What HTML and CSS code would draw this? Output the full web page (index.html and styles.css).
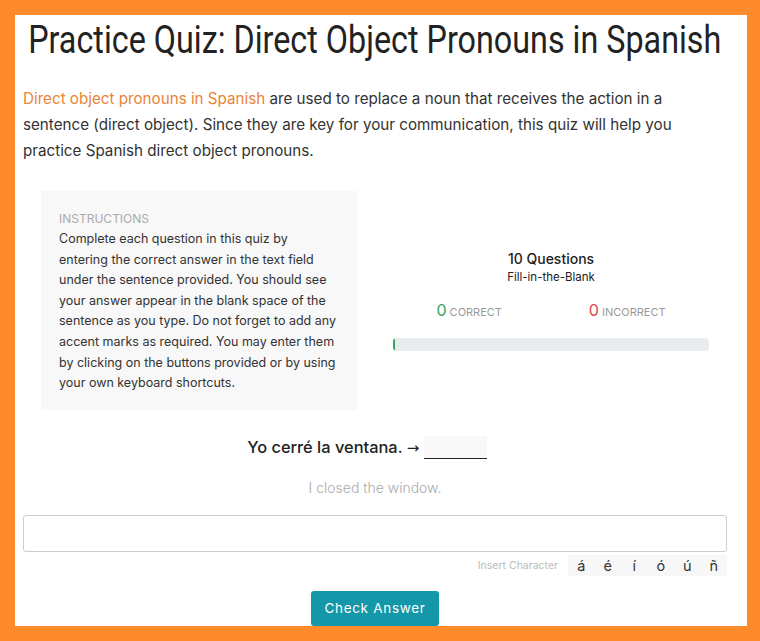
FILE: index.html
```html
<!DOCTYPE html>
<html lang="en">
<head>
    <meta charset="UTF-8">
    <meta name="viewport" content="width=device-width, initial-scale=1.0">
    <title>Practice Quiz: Direct Object Pronouns in Spanish</title>
    <link rel="stylesheet" href="styles.css">
</head>
<body>
    <div class="frame">
        <div class="page">
            <div class="title-wrap">
                <h1>Practice Quiz: Direct Object Pronouns in Spanish</h1>
            </div>
            <p class="intro">
                <a href="#">Direct object pronouns in Spanish</a> are used to replace a noun that receives the action in a
                sentence (direct object). Since they are key for your communication, this quiz will help you
                practice Spanish direct object pronouns.
            </p>

            <div class="quiz-top">
                <div class="col">
                    <div class="instructions">
                        <div class="label">INSTRUCTIONS</div>
                        <p>Complete each question in this quiz by entering the correct answer in the text field under the sentence provided. You should see your answer appear in the blank space of the sentence as you type. Do not forget to add any accent marks as required. You may enter them by clicking on the buttons provided or by using your own keyboard shortcuts.</p>
                    </div>
                </div>
                <div class="col stats">
                    <div class="count">10 Questions</div>
                    <div class="type">Fill-in-the-Blank</div>
                    <div class="score">
                        <span><b class="good">0</b> CORRECT</span>
                        <span><b class="bad">0</b> INCORRECT</span>
                    </div>
                    <div class="progress"><div class="bar" style="width: 0.5%"></div></div>
                </div>
            </div>

            <div class="question">
                Yo cerré la ventana. <span class="arrow">&rarr;</span> <span class="blank"></span>
            </div>
            <div class="translation">I closed the window.</div>

            <input type="text" class="answer">
            <div class="chars">
                <span class="chars-label">Insert Character</span>
                <div class="char-buttons">
                    <button>á</button>
                    <button>é</button>
                    <button>í</button>
                    <button>ó</button>
                    <button>ú</button>
                    <button>ñ</button>
                </div>
            </div>

            <div class="actions">
                <button class="check">Check Answer</button>
            </div>
        </div>
    </div>
</body>
</html>
```

FILE: styles.css
```css
/* Reset */
body, h1, p {
    margin: 0;
    padding: 0;
    box-sizing: border-box;
}

body {
    font-family: Inter, "Noto Sans", sans-serif;
    background-color: #fd8b2b;
    color: #333;
}

/* White frame inside the orange border */
.frame {
    margin: 15px 13px 0 15px;
    height: 611px;
    overflow: hidden;
    background: #fff;
}

.page {
    padding: 0 20px 0 8px;
}

/* Title - condensed look */
.title-wrap {
    display: flex;
    justify-content: center;
    padding-top: 2px;
    height: 48px;
}

h1 {
    flex: none;
    white-space: nowrap;
    font-family: Roboto, sans-serif;
    font-weight: 400;
    font-size: 38px;
    line-height: 46px;
    color: #222;
    transform: scaleX(0.85);
    transform-origin: center;
}

.intro {
    margin-top: 21px;
    font-size: 15.2px;
    line-height: 26px;
    color: #333;
}

.intro a {
    color: #e8843a;
    text-decoration: none;
}

/* Instructions and stats */
.quiz-top {
    display: flex;
    margin-top: 27px;
}

.col {
    flex: 1;
    padding: 0 18px;
}

.instructions {
    background: #f8f8f8;
    padding: 19px 18px 16px;
}

.instructions .label {
    font-size: 12px;
    color: #aaa;
    line-height: 18px;
    margin-bottom: 1px;
}

.instructions p {
    font-size: 12.5px;
    line-height: 20.6px;
    color: #333;
}

.stats {
    text-align: center;
    padding-top: 59px;
}

.count {
    font-size: 14px;
    font-weight: 500;
    color: #222;
}

.type {
    font-size: 11.5px;
    margin-top: 3px;
    color: #222;
}

.score {
    display: flex;
    justify-content: space-around;
    margin-top: 16px;
    font-size: 11px;
    color: #999;
}

.score b {
    font-weight: 400;
    font-size: 16px;
}

.good { color: #3aa35e; }
.bad { color: #d4464f; }

.progress {
    margin-top: 18px;
    height: 13px;
    background: #e9ecef;
    border-radius: 4px;
    overflow: hidden;
}

.bar {
    height: 100%;
    background: #3aa35e;
}

/* Question */
.question {
    margin-top: 26px;
    padding-right: 16px;
    text-align: center;
    font-size: 16.4px;
    font-weight: 500;
    color: #222;
}

.arrow {
    font-family: "DejaVu Sans", sans-serif;
    font-weight: 400;
    font-size: 15px;
}

.blank {
    display: inline-block;
    width: 63px;
    height: 22px;
    vertical-align: -6px;
    background: #f8f8f8;
    border-bottom: 1px solid #222;
}

.translation {
    margin-top: 20px;
    text-align: center;
    font-size: 14px;
    font-weight: 300;
    color: #aaa;
}

.answer {
    display: block;
    box-sizing: border-box;
    width: 100%;
    height: 37px;
    margin-top: 19px;
    border: 1px solid #ccc;
    border-radius: 3px;
    font-size: 16px;
}

.chars {
    display: flex;
    justify-content: flex-end;
    align-items: center;
    gap: 10px;
    margin-top: 3px;
}

.chars-label {
    font-size: 10.5px;
    color: #bbb;
}

.char-buttons {
    display: flex;
    background: #f7f7f7;
}

.char-buttons button {
    border: none;
    background: none;
    font-family: Inter, sans-serif;
    font-size: 14.5px;
    color: #333;
    padding: 0;
    width: 26.5px;
    height: 21px;
}

.actions {
    text-align: center;
    margin-top: 15px;
}

.check {
    background: #1497a9;
    color: #fff;
    border: none;
    border-radius: 3px;
    font-family: Inter, sans-serif;
    font-size: 13.5px;
    letter-spacing: 0.7px;
    padding: 9px 13px 10px;
}
```
